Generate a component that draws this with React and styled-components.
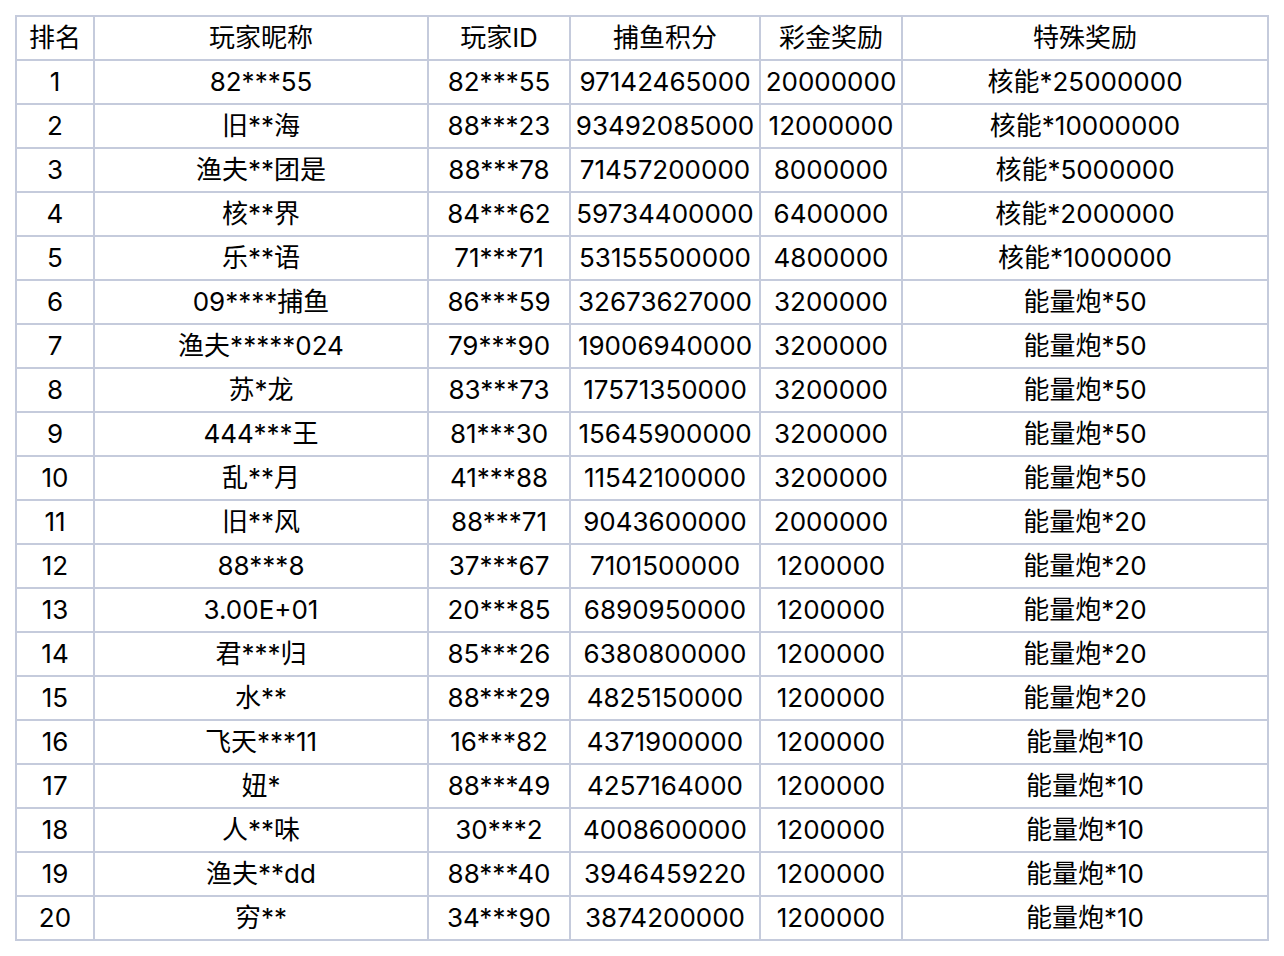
import React from "react";
import styled, { createGlobalStyle } from "styled-components";

const GlobalStyle = createGlobalStyle`
	html, body {
		margin: 0;
		padding: 0;
		background: #ffffff;
	}
`;

const Page = styled.div`
	padding: 15px;
	font-family: Inter, "Noto Sans CJK SC", sans-serif;
	color: #000;
`;

const Table = styled.table`
	border-collapse: collapse;
	table-layout: fixed;
	width: 1254px;
	font-size: 26px;
`;

const Cell = styled.td`
	border: 2px solid #c5cbdc;
	height: 42px;
	padding: 0 0 1px;
	box-sizing: border-box;
	text-align: center;
	vertical-align: middle;
	line-height: 41px;
	white-space: nowrap;
`;

const HeadCell = styled(Cell).attrs({ as: "th" })`
	font-weight: normal;
`;

const columns = [
	{ title: "排名", width: 78 },
	{ title: "玩家昵称", width: 334 },
	{ title: "玩家ID", width: 142 },
	{ title: "捕鱼积分", width: 190 },
	{ title: "彩金奖励", width: 142 },
	{ title: "特殊奖励", width: 366 },
];

const rows = [
	["1", "82***55", "82***55", "97142465000", "20000000", "核能*25000000"],
	["2", "旧**海", "88***23", "93492085000", "12000000", "核能*10000000"],
	["3", "渔夫**团是", "88***78", "71457200000", "8000000", "核能*5000000"],
	["4", "核**界", "84***62", "59734400000", "6400000", "核能*2000000"],
	["5", "乐**语", "71***71", "53155500000", "4800000", "核能*1000000"],
	["6", "09****捕鱼", "86***59", "32673627000", "3200000", "能量炮*50"],
	["7", "渔夫*****024", "79***90", "19006940000", "3200000", "能量炮*50"],
	["8", "苏*龙", "83***73", "17571350000", "3200000", "能量炮*50"],
	["9", "444***王", "81***30", "15645900000", "3200000", "能量炮*50"],
	["10", "乱**月", "41***88", "11542100000", "3200000", "能量炮*50"],
	["11", "旧**风", "88***71", "9043600000", "2000000", "能量炮*20"],
	["12", "88***8", "37***67", "7101500000", "1200000", "能量炮*20"],
	["13", "3.00E+01", "20***85", "6890950000", "1200000", "能量炮*20"],
	["14", "君***归", "85***26", "6380800000", "1200000", "能量炮*20"],
	["15", "水**", "88***29", "4825150000", "1200000", "能量炮*20"],
	["16", "飞天***11", "16***82", "4371900000", "1200000", "能量炮*10"],
	["17", "妞*", "88***49", "4257164000", "1200000", "能量炮*10"],
	["18", "人**味", "30***2", "4008600000", "1200000", "能量炮*10"],
	["19", "渔夫**dd", "88***40", "3946459220", "1200000", "能量炮*10"],
	["20", "穷**", "34***90", "3874200000", "1200000", "能量炮*10"],
];

const App = () => {
	return (
		<Page>
			<GlobalStyle />
			<Table>
				<colgroup>
					{columns.map((c) => (
						<col key={c.title} style={{ width: c.width }} />
					))}
				</colgroup>
				<thead>
					<tr>
						{columns.map((c) => (
							<HeadCell key={c.title}>{c.title}</HeadCell>
						))}
					</tr>
				</thead>
				<tbody>
					{rows.map((row) => (
						<tr key={row[0]}>
							{row.map((v, i) => (
								<Cell key={i}>{v}</Cell>
							))}
						</tr>
					))}
				</tbody>
			</Table>
		</Page>
	);
};

export default App;
